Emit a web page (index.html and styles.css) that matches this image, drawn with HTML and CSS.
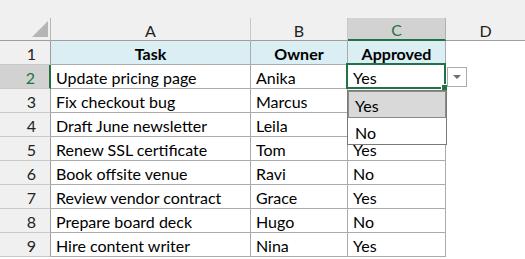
FILE: index.html
```html
<!DOCTYPE html>
<html>
<head>
<meta charset="utf-8">
<link rel="stylesheet" href="styles.css">
</head>
<body>
<div class="sheet">
  <div class="topbar"></div>

  <div class="corner"><span class="tri"></span></div>
  <div class="colhead">A</div>
  <div class="colhead">B</div>
  <div class="colhead sel">C</div>
  <div class="colhead last">D</div>

  <div class="rowhead">1</div>
  <div class="cell hdr">Task</div>
  <div class="cell hdr">Owner</div>
  <div class="cell hdr">Approved</div>
  <div class="blank"></div>

  <div class="rowhead sel">2</div>
  <div class="cell">Update pricing page</div>
  <div class="cell">Anika</div>
  <div class="cell active">Yes
    <div class="selbox"><span class="handle"></span></div>
    <div class="ddbtn"><span class="arrow"></span></div>
    <div class="ddlist">
      <div class="dditem on">Yes</div>
      <div class="dditem">No</div>
    </div>
  </div>
  <div class="blank"></div>

  <div class="rowhead">3</div>
  <div class="cell">Fix checkout bug</div>
  <div class="cell">Marcus</div>
  <div class="cell"></div>
  <div class="blank"></div>

  <div class="rowhead">4</div>
  <div class="cell">Draft June newsletter</div>
  <div class="cell">Leila</div>
  <div class="cell"></div>
  <div class="blank"></div>

  <div class="rowhead">5</div>
  <div class="cell">Renew SSL certificate</div>
  <div class="cell">Tom</div>
  <div class="cell">Yes</div>
  <div class="blank"></div>

  <div class="rowhead">6</div>
  <div class="cell">Book offsite venue</div>
  <div class="cell">Ravi</div>
  <div class="cell">No</div>
  <div class="blank"></div>

  <div class="rowhead">7</div>
  <div class="cell">Review vendor contract</div>
  <div class="cell">Grace</div>
  <div class="cell">Yes</div>
  <div class="blank"></div>

  <div class="rowhead">8</div>
  <div class="cell">Prepare board deck</div>
  <div class="cell">Hugo</div>
  <div class="cell">No</div>
  <div class="blank"></div>

  <div class="rowhead">9</div>
  <div class="cell">Hire content writer</div>
  <div class="cell">Nina</div>
  <div class="cell">Yes</div>
  <div class="blank"></div>
</div>
</body>
</html>
```

FILE: styles.css
```css
html, body {
  margin: 0;
  padding: 0;
  background: #ffffff;
}
body {
  font-family: Lato, "Open Sans", sans-serif;
  font-size: 16px;
  color: #000;
}
.sheet {
  display: grid;
  grid-template-columns: 51px 200px 97px 98px 1fr;
  grid-template-rows: 18px 23px repeat(9, 24px);
  width: 525px;
  height: 259px;
  overflow: hidden;
}
.sheet > div {
  box-sizing: border-box;
}
.topbar {
  grid-column: 1 / -1;
  background: #f0f0f0;
}
.corner {
  background: #f0f0f0;
  border-right: 1px solid #b7b7b7;
  border-bottom: 1px solid #9e9e9e;
  display: flex;
  justify-content: flex-end;
  align-items: flex-end;
  padding: 0 2px 3px 0;
}
.tri {
  width: 0;
  height: 0;
  border-left: 16px solid transparent;
  border-bottom: 16px solid #b5b5b5;
}
.colhead {
  background: #f0f0f0;
  border-right: 1px solid #c8c8c8;
  border-bottom: 1px solid #9e9e9e;
  display: flex;
  align-items: center;
  justify-content: center;
  padding-top: 2px;
  color: #222;
}
.colhead.last {
  border-right: none;
}
.colhead.sel {
  background: #d2d2d2;
  color: #217346;
  border-bottom: 2px solid #217346;
  border-right: 1px solid #b0b0b0;
}
.rowhead {
  background: #f0f0f0;
  border-right: 1px solid #9e9e9e;
  border-bottom: 1px solid #c8c8c8;
  display: flex;
  align-items: center;
  justify-content: flex-end;
  padding: 2px 14px 0 0;
  color: #222;
}
.rowhead.sel {
  background: #d2d2d2;
  color: #217346;
  border-right: 2px solid #217346;
}
.cell {
  border-right: 1px solid #ababab;
  border-bottom: 1px solid #ababab;
  display: flex;
  align-items: center;
  padding: 2px 0 0 5px;
  white-space: nowrap;
}
.cell.hdr {
  background: #daeef3;
  font-weight: bold;
  justify-content: center;
  padding-left: 0;
}
.blank {
  background: #fff;
}
.cell.active {
  position: relative;
}
.selbox {
  position: absolute;
  left: -2px;
  top: -2px;
  right: -1px;
  bottom: -1px;
  border: 2px solid #217346;
  z-index: 2;
}
.handle {
  position: absolute;
  right: -4px;
  bottom: -4px;
  width: 5px;
  height: 5px;
  background: #217346;
  border: 1px solid #fff;
}
.ddbtn {
  position: absolute;
  left: 99px;
  top: 2px;
  width: 20px;
  height: 20px;
  box-sizing: border-box;
  border: 1px solid #ababab;
  background: #fff;
  display: flex;
  align-items: center;
  justify-content: center;
  z-index: 3;
}
.arrow {
  width: 0;
  height: 0;
  border-left: 4px solid transparent;
  border-right: 4px solid transparent;
  border-top: 4px solid #6f6f6f;
}
.ddlist {
  position: absolute;
  left: -1px;
  top: 25px;
  width: 100px;
  height: 55px;
  box-sizing: border-box;
  border: 1px solid #7a7a7a;
  background: #fff;
  z-index: 4;
}
.dditem {
  height: 27px;
  box-sizing: border-box;
  display: flex;
  align-items: center;
  padding: 2px 0 0 7px;
}
.dditem.on {
  background: #d9d9d9;
  border: 1px solid #8a8a8a;
  padding-left: 6px;
}
```
